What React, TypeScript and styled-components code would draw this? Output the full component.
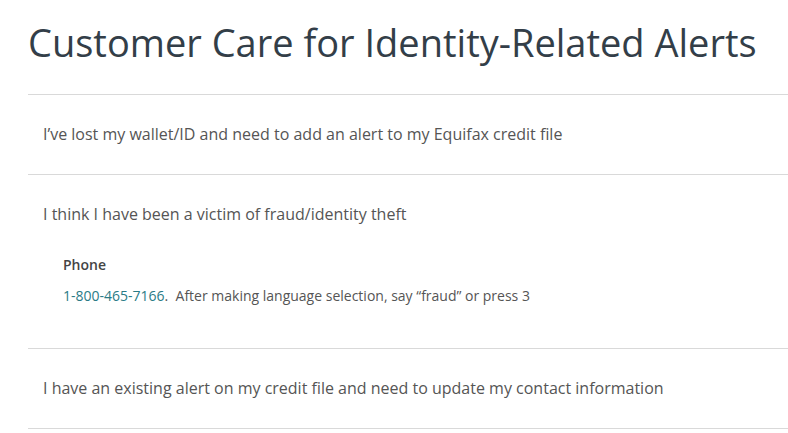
import React from "react";
import styled, { createGlobalStyle } from "styled-components";

const Global = createGlobalStyle`
  html, body { margin: 0; padding: 0; background: #fff; }
  body { font-family: "Open Sans", "Liberation Sans", sans-serif; }
`;

const Page = styled.main`
  padding: 16px 0 0 28px;
`;

const Title = styled.h1`
  margin: 0 0 26px 0;
  font-family: "Open Sans", sans-serif;
  font-weight: 400;
  font-size: 38px;
  line-height: 52px;
  color: #333e48;
`;

const List = styled.div`
  border-top: 1px solid #d9d9d9;
`;

const Item = styled.section`
  border-bottom: 1px solid #d9d9d9;
  padding: 28px 15px;
`;

const Question = styled.div`
  font-size: 16px;
  line-height: 23px;
  color: #555;
`;

const Answer = styled.div`
  padding: 28px 0 13px 20px;
`;

const Label = styled.div`
  font-size: 14px;
  font-weight: 600;
  line-height: 22px;
  color: #444;
  margin-bottom: 9px;
`;

const Detail = styled.div`
  font-size: 14px;
  line-height: 22px;
  color: #555;
`;

const Link = styled.a`
  color: #2a7b86;
  text-decoration: none;
`;

export default function App() {
  return (
    <>
      <Global />
      <Page>
        <Title>Customer Care for Identity-Related Alerts</Title>
        <List>
          <Item>
            <Question>I’ve lost my wallet/ID and need to add an alert to my Equifax credit file</Question>
          </Item>
          <Item>
            <Question>I think I have been a victim of fraud/identity theft</Question>
            <Answer>
              <Label>Phone</Label>
              <Detail>
                <Link href="#">1-800-465-7166</Link>.&nbsp; After making language selection, say “fraud” or press 3
              </Detail>
            </Answer>
          </Item>
          <Item>
            <Question>I have an existing alert on my credit file and need to update my contact information</Question>
          </Item>
        </List>
      </Page>
    </>
  );
}
